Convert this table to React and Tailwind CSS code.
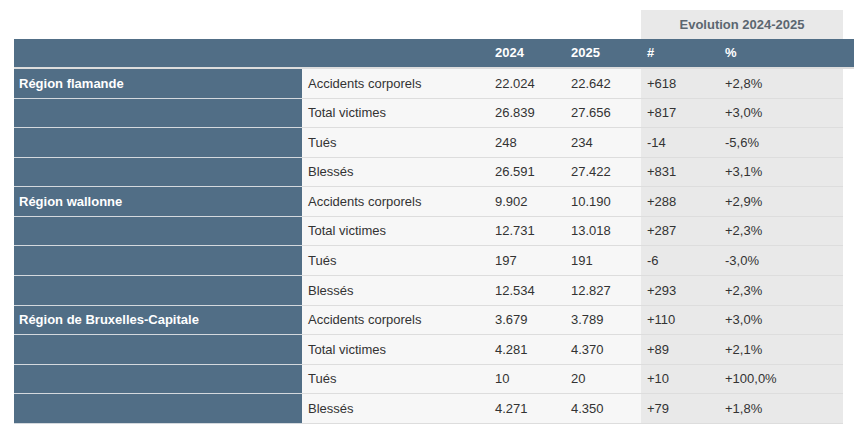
import React from "react";

const data = [
  {
    region: "Région flamande",
    rows: [
      ["Accidents corporels", "22.024", "22.642", "+618", "+2,8%"],
      ["Total victimes", "26.839", "27.656", "+817", "+3,0%"],
      ["Tués", "248", "234", "-14", "-5,6%"],
      ["Blessés", "26.591", "27.422", "+831", "+3,1%"],
    ],
  },
  {
    region: "Région wallonne",
    rows: [
      ["Accidents corporels", "9.902", "10.190", "+288", "+2,9%"],
      ["Total victimes", "12.731", "13.018", "+287", "+2,3%"],
      ["Tués", "197", "191", "-6", "-3,0%"],
      ["Blessés", "12.534", "12.827", "+293", "+2,3%"],
    ],
  },
  {
    region: "Région de Bruxelles-Capitale",
    rows: [
      ["Accidents corporels", "3.679", "3.789", "+110", "+3,0%"],
      ["Total victimes", "4.281", "4.370", "+89", "+2,1%"],
      ["Tués", "10", "20", "+10", "+100,0%"],
      ["Blessés", "4.271", "4.350", "+79", "+1,8%"],
    ],
  },
];

export default function App() {
  return (
    <div
      className="w-[854px] h-[434px] bg-white text-[13px] text-[#333333]"
      style={{ fontFamily: '"Liberation Sans", Arial, sans-serif' }}
    >
      <div className="pl-[14px] pt-[10px]">
        <div className="flex">
          <div className="w-[627px]" />
          <div className="w-[202px] h-[29px] bg-[#e9e9e9] flex items-center justify-center font-bold text-[#5b6670]">
            Evolution 2024-2025
          </div>
        </div>
        <div className="flex h-[30px] bg-[#516e86] border-b-2 border-[#dddddd] text-white font-bold">
          <div className="w-[288px]" />
          <div className="w-[187px]" />
          <div className="w-[76px] pl-[6px] flex items-center">2024</div>
          <div className="w-[76px] pl-[6px] flex items-center">2025</div>
          <div className="w-[78px] pl-[6px] flex items-center">#</div>
          <div className="w-[124px] pl-[6px] flex items-center">%</div>
        </div>
        {data.map((g) =>
          g.rows.map((r, i) => (
            <div key={g.region + i} className="flex h-[29.58px]">
              <div className="w-[288px] bg-[#516e86] border-b border-[#d4d9de] pl-[5px] flex items-center font-bold text-white">
                {i === 0 ? g.region : ""}
              </div>
              <div className="w-[187px] bg-[#f7f7f7] border-b border-[#dddddd] pl-[6px] flex items-center">
                {r[0]}
              </div>
              <div className="w-[76px] bg-[#f7f7f7] border-b border-[#dddddd] pl-[6px] flex items-center">
                {r[1]}
              </div>
              <div className="w-[76px] bg-[#f7f7f7] border-b border-[#dddddd] pl-[6px] flex items-center">
                {r[2]}
              </div>
              <div className="w-[78px] bg-[#e9e9e9] border-b border-[#dddddd] pl-[6px] flex items-center">
                {r[3]}
              </div>
              <div className="w-[124px] bg-[#e9e9e9] border-b border-[#dddddd] pl-[6px] flex items-center">
                {r[4]}
              </div>
            </div>
          ))
        )}
      </div>
    </div>
  );
}
